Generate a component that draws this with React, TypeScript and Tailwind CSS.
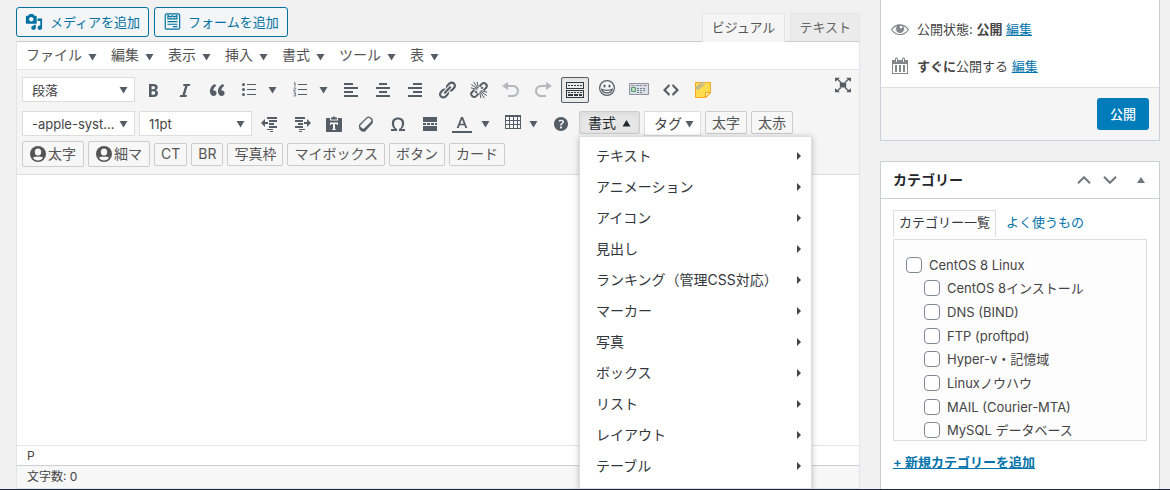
import type { ReactNode } from "react";
import clsx from "clsx";

const MENUS = ["ファイル", "編集", "表示", "挿入", "書式", "ツール", "表"];

const FORMAT_ITEMS = [
  "テキスト",
  "アニメーション",
  "アイコン",
  "見出し",
  "ランキング（管理CSS対応）",
  "マーカー",
  "写真",
  "ボックス",
  "リスト",
  "レイアウト",
  "テーブル",
];

const CATEGORIES = [
  { name: "CentOS 8 Linux", child: false },
  { name: "CentOS 8インストール", child: true },
  { name: "DNS (BIND)", child: true },
  { name: "FTP (proftpd)", child: true },
  { name: "Hyper-v・記憶域", child: true },
  { name: "Linuxノウハウ", child: true },
  { name: "MAIL (Courier-MTA)", child: true },
  { name: "MySQL データベース", child: true },
];

const PATHS = {
  bold: "M6 4v13h4.54c1.37 0 2.46-.33 3.26-1 .8-.66 1.2-1.58 1.2-2.77 0-.84-.17-1.51-.51-2.01s-.9-.85-1.67-1.03v-.09c.57-.1 1.02-.4 1.36-.9s.51-1.13.51-1.91c0-1.14-.39-1.98-1.17-2.5C12.75 4.26 11.5 4 9.78 4H6zm2.57 5.15V6.26h1.36c.73 0 1.27.11 1.61.32.34.22.51.58.51 1.07 0 .54-.16.92-.47 1.15s-.82.35-1.51.35h-1.5zm0 2.19h1.6c1.44 0 2.16.53 2.16 1.61 0 .6-.17 1.05-.51 1.34s-.86.43-1.57.43H8.57v-3.38z",
  italic: "M14.78 6h-2.13l-2.8 9h2.12l-.62 2H4.6l.62-2h2.14l2.8-9H8.03l.62-2h6.75z",
  quote: "M9.49 13.22c0-.74-.2-1.38-.61-1.9-.62-.78-1.83-.88-2.53-.72-.29-1.65 1.11-3.75 2.92-4.65L7.88 4c-2.73 1.3-5.42 4.28-4.96 8.05C3.21 14.43 4.59 16 6.54 16c.85 0 1.56-.25 2.12-.75s.83-1.18.83-2.03zm8.05 0c0-.74-.2-1.38-.61-1.9-.63-.78-1.83-.88-2.53-.72-.29-1.65 1.11-3.75 2.92-4.65L15.93 4c-2.73 1.3-5.41 4.28-4.95 8.05.29 2.38 1.66 3.95 3.61 3.95.85 0 1.56-.25 2.12-.75s.83-1.18.83-2.03z",
  alignLeft: "M12 5V3H3v2h9zm5 4V7H3v2h14zm-5 4v-2H3v2h9zm5 4v-2H3v2h14z",
  alignCenter: "M14 5V3H6v2h8zm3 4V7H3v2h14zm-3 4v-2H6v2h8zm3 4v-2H3v2h14z",
  alignRight: "M17 5V3H8v2h9zm0 4V7H3v2h14zm0 4v-2H8v2h9zm0 4v-2H3v2h14z",
  link: "M17.74 2.76c1.68 1.69 1.68 4.41 0 6.1l-1.53 1.52c-1.12 1.12-2.7 1.47-4.14 1.09l2.62-2.61.76-.77.76-.76c.84-.84.84-2.2 0-3.04-.84-.85-2.2-.85-3.04 0l-.77.76-3.38 3.38c-.37-1.44-.02-3.02 1.1-4.14l1.52-1.53c1.69-1.68 4.42-1.68 6.1 0zM8.59 13.43l5.34-5.34c.42-.42.42-1.1 0-1.52-.44-.43-1.13-.39-1.53 0l-5.33 5.34c-.42.42-.42 1.1 0 1.52.44.43 1.13.39 1.52 0zm-.76 2.29l4.14-4.15c.38 1.44.03 3.02-1.09 4.14l-1.52 1.53c-1.69 1.68-4.41 1.68-6.1 0-1.68-1.68-1.68-4.42 0-6.1l1.53-1.52c1.12-1.12 2.7-1.47 4.14-1.1l-4.14 4.15c-.85.84-.85 2.2 0 3.05.84.84 2.2.84 3.04 0z",
  undo: "M12 5H7V2L1 6l6 4V7h5c2.2 0 4 1.8 4 4s-1.8 4-4 4H7v2h5c3.3 0 6-2.7 6-6s-2.7-6-6-6z",
  redo: "M8 5h5V2l6 4-6 4V7H8c-2.2 0-4 1.8-4 4s1.8 4 4 4h5v2H8c-3.3 0-6-2.7-6-6s2.7-6 6-6z",
  omega: "M10 5.4c1.27 0 2.24.36 2.91 1.08.66.71 1 1.76 1 3.13 0 1.28-.23 2.37-.69 3.27-.47.89-1.27 1.52-2.22 2.12v2h6v-2h-3.69c.92-.64 1.62-1.34 2.12-2.34.49-1.01.74-2.13.74-3.35 0-1.78-.55-3.19-1.65-4.22S11.92 3.54 10 3.54s-3.43.53-4.52 1.57c-1.1 1.04-1.65 2.44-1.65 4.2 0 1.21.24 2.31.73 3.33.48 1.01 1.19 1.71 2.1 2.36H3v2h6v-2c-.98-.64-1.8-1.28-2.24-2.17-.45-.89-.67-1.96-.67-3.22 0-1.37.33-2.41 1-3.13C7.75 5.76 8.72 5.4 10 5.4z",
  help: "M17 10c0-3.87-3.14-7-7-7-3.87 0-7 3.13-7 7s3.13 7 7 7c3.86 0 7-3.13 7-7zm-6.3 1.48H9.14v-.43c0-.38.08-.7.24-.98s.46-.57.88-.89c.41-.29.68-.53.81-.71.14-.18.2-.39.2-.62 0-.25-.09-.44-.28-.58-.19-.13-.45-.19-.79-.19-.58 0-1.25.19-2 .57l-.64-1.28c.87-.49 1.8-.74 2.77-.74.81 0 1.45.2 1.92.58.48.39.71.91.71 1.55 0 .43-.09.8-.29 1.11-.19.32-.57.67-1.11 1.06-.38.28-.61.49-.71.63-.1.15-.15.34-.15.57v.35zm-1.47 2.74c-.18-.17-.27-.42-.27-.73 0-.33.08-.58.26-.75s.43-.25.77-.25c.32 0 .57.09.75.26s.27.42.27.74c0 .3-.09.55-.27.72-.18.18-.43.27-.75.27-.33 0-.58-.09-.76-.26z",
  code: "M9 6l-4 4 4 4-1 2-6-6 6-6zm2 8l4-4-4-4 1-2 6 6-6 6z",
  media: "M13 11V4c0-.55-.45-1-1-1h-1.67L9 1H5L3.67 3H2c-.55 0-1 .45-1 1v7c0 .55.45 1 1 1h10c.55 0 1-.45 1-1zM7 4.5c1.38 0 2.5 1.12 2.5 2.5S8.38 9.5 7 9.5 4.5 8.38 4.5 7 5.62 4.5 7 4.5zM14 6h5v10.5c0 1.38-1.12 2.5-2.5 2.5S14 17.88 14 16.5s1.12-2.5 2.5-2.5c.17 0 .34.02.5.05V9h-3V6zm-4 8.05V13h2v3.5c0 1.38-1.12 2.5-2.5 2.5S7 17.88 7 16.5 8.12 14 9.5 14c.17 0 .34.02.5.05z",
  eye: "M18.3 9.5C15 4.9 8.5 3.8 3.9 7.2c-1.2.9-2.2 2.1-3 3.4.2.4.5.8.8 1.2 3.3 4.6 9.6 5.6 14.2 2.4.9-.7 1.7-1.4 2.4-2.4.3-.4.5-.8.8-1.2-.3-.4-.5-.8-.8-1.1zm-8.2-2.3c.5-.5 1.3-.5 1.8 0s.5 1.3 0 1.8-1.3.5-1.8 0-.5-1.3 0-1.8zm-.1 7.7c-3.1 0-6-1.6-7.7-4.2C3.5 9 5.1 7.8 7 7.2c-.7.8-1 1.7-1 2.7 0 2.2 1.7 4.1 4 4.1 2.2 0 4.1-1.7 4.1-4v-.1c0-1-.4-2-1.1-2.7 1.9.6 3.5 1.8 4.7 3.5-1.7 2.6-4.6 4.2-7.7 4.2z",
  calendar: "M15 4h3v14H2V4h3V3c0-.83.67-1.5 1.5-1.5S8 2.17 8 3v1h4V3c0-.83.67-1.5 1.5-1.5S15 2.17 15 3v1zM6 3v2.5c0 .28.22.5.5.5s.5-.22.5-.5V3c0-.28-.22-.5-.5-.5S6 2.72 6 3zm7 0v2.5c0 .28.22.5.5.5s.5-.22.5-.5V3c0-.28-.22-.5-.5-.5s-.5.22-.5.5zm4 14V8H3v9h14zM7 16V9H5v7h2zm4 0V9H9v7h2zm4 0V9h-2v7h2z",
};

function Svg({ children, className = "h-5 w-5" }: { children: ReactNode; className?: string }) {
  return (
    <svg viewBox="0 0 20 20" fill="currentColor" className={clsx("shrink-0", className)} aria-hidden="true">
      {children}
    </svg>
  );
}

function Glyph({ name, className }: { name: keyof typeof PATHS; className?: string }) {
  return <Svg className={className}><path d={PATHS[name]} /></Svg>;
}

function Caret({ up = false }: { up?: boolean }) {
  return (
    <svg viewBox="0 0 9 8" className="h-2 w-[9px] shrink-0" fill="currentColor" aria-hidden="true">
      <path d={up ? "M4.500 1L8.500 7.500h-8z" : "M.5 1h8L4.500 7.500z"} />
    </svg>
  );
}

function ListIcon({ ordered = false }: { ordered?: boolean }) {
  return (
    <Svg>
      <path d="M8 4h9v1H8zM8 9h9v1H8zM8 14h9v1H8z" />
      {ordered ? (
        <path fill="none" stroke="currentColor" strokeWidth=".9" d="M4 3.2l1-.7v4M3.6 8.4c.2-.9 2-.9 2 .1 0 .8-1.900 1.400-2 2.400h2.200M3.600 12.900c.8-.7 2-.4 2 .4 0 .7-.6.9-1.100.9.6 0 1.300.2 1.300 1 0 1.100-1.500 1.200-2.200.6" />
      ) : (
        <g><circle cx="4.5" cy="4.5" r="1.5" /><circle cx="4.5" cy="9.5" r="1.5" /><circle cx="4.5" cy="14.5" r="1.5" /></g>
      )}
    </Svg>
  );
}

function UnlinkIcon() {
  return (
    <Svg>
      <g fill="none" stroke="currentColor" strokeWidth="2">
        <path d="M10.5 6.5l2.3-2.6a2.9 2.9 0 014.1 4.1l-2.4 2.3M9.5 13.5l-2.3 2.6A2.9 2.9 0 013.1 12l2.4-2.3M12.2 8.6l1.5-1.5M6.3 12.9l1.6-1.6" />
        <path strokeWidth="1" d="M8.6 8.8L2.2 4.4M8.8 8.2L4.6 1.9M9.4 7.6L8 1.8M8.2 9.4L1.9 7.8M11.4 11.2l6.4 4.4M11.2 11.8l4.2 6.3M10.6 12.4l1.4 5.8M11.8 10.6l6.3 1.6" />
      </g>
    </Svg>
  );
}

function IndentIcon({ outdent = false }: { outdent?: boolean }) {
  return (
    <Svg>
      {outdent ? (
        <path d="M7 3h10v2H7zM9 6h8v2H9zM9 9h5v2H9zM9 12h8v2H9zM7 15h6v1H7zM10 17h3v1h-3zM1 9l4-4v3h3v2H5v3z" />
      ) : (
        <path d="M3 3h10v2H3zM3 6h8v2H3zM6 9h5v2H6zM3 12h8v2H3zM7 15h6v1H7zM7 17h3v1H7zM19 9l-4-4v3h-3v2h3v3z" />
      )}
    </Svg>
  );
}

function PasteIcon() {
  return (
    <Svg>
      <path d="M3 4h3v2.5h8V4h3c.6 0 1 .4 1 1v12c0 .6-.4 1-1 1H3c-.6 0-1-.4-1-1V5c0-.6.4-1 1-1z" />
      <path d="M7 5.5V3.5h1.5a1.6 1.6 0 013 0H13v2z" />
      <path fill="#f5f5f5" d="M6 8.5h8V11h-1l-.5-1h-1.5v5l1 .5v.5H8v-.5l1-.5v-5H7.500L7 11H6z" />
    </Svg>
  );
}

function EraserIcon() {
  return (
    <Svg>
      <path d="M3.4 12l-.2 3 2.600 2.600 3 .2 8-8.800-.6-3.400z" />
      <path fill="#f5f5f5" stroke="currentColor" strokeWidth="1.300" strokeLinejoin="round" d="M4 10.800l6.600-6.700c.9-.9 2.600-1.100 3.700-.2l1 .9c.9.900 1 2.500.1 3.500L8.800 14.600c-.8.800-2 .9-2.900.1l-1.600-1.300c-.8-.7-1-1.900-.3-2.600z" />
    </Svg>
  );
}

function ReadMoreIcon() {
  return <Svg><path d="M3 3h14v5H3zM3 9h3v2H3zM7 9h3v2H7zM11 9h3v2h-3zM15 9h2v2h-2zM3 12h14v5H3z" /></Svg>;
}

function ColorIcon() {
  return (
    <Svg>
      <path d="M9 3h2l4.300 11h-2l-1-2.800H7.700L6.700 14h-2zM10 5.200L8.300 9.700h3.400z" />
      <path d="M0 17h20v2H0z" />
    </Svg>
  );
}

function TableIcon() {
  return <Svg><path fillRule="evenodd" d="M2 1h16v14H2zM3 3v3h3V3zm4 0v3h3V3zm4 0v3h3V3zm4 0v3h2V3zM3 7v3h3V7zm4 0v3h3V7zm4 0v3h3V7zm4 0v3h2V7zM3 11v3h3v-3zm4 0v3h3v-3zm4 0v3h3v-3zm4 0v3h2v-3z" /></Svg>;
}

function KitchenSinkIcon() {
  return (
    <Svg className="h-5 w-5 text-[#32373c]">
      <path fillRule="evenodd" d="M1 2h18v7H1zM2 3v5h16V3zM1 10h18v8H1zM2 11v6h16v-6z" />
      <path d="M3 5h2v1H3zM6 5h2v1H6zM9 5h2v1H9zM12 5h2v1h-2zM15 5h2v1h-2zM3 12h2v1H3zM6 12h2v1H6zM9 12h2v1H9zM12 12h2v1h-2zM15 12h2v1h-2zM3 14h5v2H3zM9 14h4v2H9zM14 14h3v2h-3z" />
    </Svg>
  );
}

function SmileIcon() {
  return (
    <Svg>
      <circle cx="10" cy="8" r="7.400" fill="none" stroke="currentColor" strokeWidth="1.200" />
      <ellipse cx="7.500" cy="6" rx="1.100" ry="1.600" />
      <ellipse cx="12.500" cy="6" rx="1.100" ry="1.600" />
      <path fill="none" stroke="currentColor" strokeWidth="1.200" d="M4.800 9.300c.8 4.700 9.600 4.700 10.400 0-2.700 1.300-7.700 1.300-10.400 0z" />
    </Svg>
  );
}

function ShortcodeIcon() {
  return (
    <Svg>
      <path fill="#d8e0ea" stroke="#92929e" d="M.5 3.500h19v11H.500z" />
      <path fill="none" stroke="#b98b98" d="M2 5.500h4M14 5.500h4" />
      <path fill="#b9e0b9" stroke="#5a9470" d="M2.500 7.500h4v4h-4z" />
      <path stroke="#777c89" strokeDasharray="2 1" d="M7.500 5.500h6M8 8.500h9M8 10.500h8M8 12.500h6" />
    </Svg>
  );
}

function NoteIcon() {
  return (
    <Svg>
      <path fill="#ffdc4d" stroke="#f9a825" d="M2.500 2.500h15v10.500l-4.500 4.500H2.500z" />
      <path fill="#fff0a0" stroke="#f9a825" d="M12.500 17.500v-5h5z" />
      <path fill="none" stroke="#b8b39a" strokeWidth="1.200" d="M2.500 8.500L9 2.800c1.800-1 2.800.6 1.800 1.800L5.500 9c-1.200.8-2-.3-1.200-1.200L8.500 4" />
    </Svg>
  );
}

function FullscreenIcon() {
  return (
    <Svg className="h-4 w-4">
      <path d="M0 1h6L4.300 2.700 8 6.200 6.800 7.400 3 3.800 0 6zM20 1h-6l1.700 1.700L12 6.200l1.200 1.200L17 3.800 20 6zM0 19h6l-1.700-1.700L8 13.800l-1.200-1.200L3 16.200 0 14zM20 19h-6l1.700-1.700-3.700-3.500 1.200-1.200 3.800 3.600 3-2.200zM6 7h8v6H6z" />
    </Svg>
  );
}

function UserIcon() {
  return (
    <Svg className="h-4 w-4">
      <circle cx="10" cy="10" r="10" />
      <ellipse cx="10" cy="7.500" rx="4" ry="4.500" fill="#f7f7f7" />
      <path fill="#f7f7f7" d="M3.500 14.500c1.500-.8 3-1.300 4.500-1.500.8.600 3.200.6 4 0 1.500.2 3 .7 4.500 1.500-1.500 2.500-3.800 3.700-6.500 3.700s-5-1.200-6.500-3.700z" />
    </Svg>
  );
}

function FormIcon() {
  return (
    <Svg className="h-[18px] w-[18px]">
      <g fill="none" stroke="currentColor" strokeWidth="1.300">
        <rect x="2.500" y="1" width="16" height="17" rx="1.500" />
        <path d="M5.500 2v4.500h10V2M6 3l2.500 1.500L10.500 3l2 1.500L15 3M5 9.500h11M5 12.500h11M11 15.200h5" />
      </g>
    </Svg>
  );
}

function Tool({ label, off, active, children }: { label: string; off?: boolean; active?: boolean; children: ReactNode }) {
  return (
    <button
      aria-label={label}
      disabled={off}
      className={clsx(
        "flex h-[26px] w-7 shrink-0 items-center justify-center rounded-xs",
        off && "opacity-40",
        active && "border border-[#555d66] bg-[#ebebeb] shadow-inner",
      )}
    >
      {children}
    </button>
  );
}

function SplitTool({ label, narrow, children }: { label: string; narrow?: boolean; children: ReactNode }) {
  return (
    <button aria-label={label} className={clsx("flex h-[26px] shrink-0 items-center pl-1", narrow ? "w-11 gap-[2px]" : "w-[47px] gap-[5px]")}>
      {children}
      <span className="flex w-4 justify-center"><Caret /></span>
    </button>
  );
}

function TextTool({ children, tall }: { children: ReactNode; tall?: boolean }) {
  return (
    <button
      className={clsx(
        "flex shrink-0 items-center rounded-xs border border-[#ccc] bg-[#f7f7f7] text-sm leading-5 text-[#555]",
        tall ? "h-[26px] gap-[2px] px-[7px]" : "h-[23px] px-[6px]",
      )}
    >
      {children}
    </button>
  );
}

function Picker({ label, value, className }: { label: string; value: string; className: string }) {
  return (
    <div className={clsx("grid h-[25px] shrink-0 items-center border border-[#ddd] bg-white", className)}>
      <select aria-label={label} className="col-start-1 row-start-1 h-full w-full appearance-none bg-transparent pl-[9px] text-[#444] outline-none">
        <option>{value}</option>
      </select>
      <span className="pointer-events-none col-start-1 row-start-1 mr-[6px] justify-self-end"><Caret /></span>
    </div>
  );
}

function FormatMenu() {
  return (
    <div className="relative shrink-0 self-start">
      <button
        aria-haspopup="menu"
        aria-expanded="true"
        className="flex h-[23px] items-center gap-[6px] rounded-xs border border-[#ccc] bg-[#e6e6e6] px-2 text-sm leading-5 text-[#23282d] shadow-inner"
      >
        書式 <Caret up />
      </button>
      <div role="menu" className="absolute top-[25px] left-0 z-10 w-[233px] border border-[#ddd] bg-white pt-[3px] pb-[7px] shadow-[0_1px_6px_rgba(0,0,0,0.25)]">
        {FORMAT_ITEMS.map((item) => (
          <button key={item} role="menuitem" className="flex h-[31px] w-full items-center justify-between pr-[10px] pl-4 text-sm leading-5 text-[#32373c]">
            {item}
            <svg viewBox="0 0 4 8" className="h-2 w-1" fill="#444" aria-hidden="true"><path d="M0 0l4 4-4 4z" /></svg>
          </button>
        ))}
      </div>
    </div>
  );
}

function Editor() {
  return (
    <main className="flex min-w-0 flex-1 flex-col font-['Inter','Noto_Sans_CJK_JP',sans-serif]">
      {/* Media buttons and mode tabs */}
      <div className="flex h-[41px] shrink-0 justify-between">
        <div className="flex gap-[5px] pt-[7px]">
          <button className="flex h-[30px] items-center gap-[7px] rounded-[3px] border border-[#0071a1] bg-[#f3f5f6] px-2 pb-px text-[#0071a1]">
            <Glyph name="media" className="h-[18px] w-[18px]" />
            メディアを追加
          </button>
          <button className="flex h-[30px] items-center gap-[7px] rounded-[3px] border border-[#0071a1] bg-[#f3f5f6] px-2 pb-px text-[#0071a1]">
            <FormIcon />
            フォームを追加
          </button>
        </div>
        <div className="flex items-end gap-[5px]">
          <button className="z-1 -mb-px h-[29px] border border-b-0 border-[#e5e5e5] bg-[#f5f5f5] px-[9px] pb-[2px] text-[#555]">ビジュアル</button>
          <button className="h-7 border border-b-0 border-[#e5e5e5] bg-[#ebebeb] px-2 pb-px text-[#666]">テキスト</button>
        </div>
      </div>

      <div className="flex min-h-0 flex-1 flex-col border border-[#e2e4e7] border-t-[#ccc] bg-white">
        <nav className="flex h-7 shrink-0 items-center border-b border-[#e2e4e7] px-[2px] pb-[2px]">
          {MENUS.map((m) => (
            <button key={m} className="flex items-center gap-[6px] px-[7px] text-sm leading-5 text-[#555]">
              {m} <span className="pt-1 text-[#555d66]"><Caret /></span>
            </button>
          ))}
        </nav>

        {/* Toolbars */}
        <div className="shrink-0 border-b border-[#ddd] bg-[#f5f5f5] px-[5px] py-[7px] text-[#555d66]">
          <div className="mb-2 flex h-[26px] gap-1">
            <Picker label="段落形式" value="段落" className="w-[113px]" />
            <Tool label="太字"><Glyph name="bold" /></Tool>
            <Tool label="イタリック"><Glyph name="italic" /></Tool>
            <Tool label="引用"><Glyph name="quote" /></Tool>
            <SplitTool label="番号なしリスト"><ListIcon /></SplitTool>
            <SplitTool label="番号付きリスト"><ListIcon ordered /></SplitTool>
            <Tool label="左寄せ"><Glyph name="alignLeft" /></Tool>
            <Tool label="中央揃え"><Glyph name="alignCenter" /></Tool>
            <Tool label="右寄せ"><Glyph name="alignRight" /></Tool>
            <Tool label="リンク"><Glyph name="link" /></Tool>
            <Tool label="リンク解除"><UnlinkIcon /></Tool>
            <Tool label="取り消し" off><Glyph name="undo" /></Tool>
            <Tool label="やり直し" off><Glyph name="redo" /></Tool>
            <Tool label="ツールバー切り替え" active><KitchenSinkIcon /></Tool>
            <Tool label="絵文字"><SmileIcon /></Tool>
            <Tool label="ショートコード"><ShortcodeIcon /></Tool>
            <Tool label="ソースコード"><Glyph name="code" /></Tool>
            <Tool label="メモ"><NoteIcon /></Tool>
            <button aria-label="集中執筆モード" className="ml-auto flex h-4 w-[22px] items-center justify-center"><FullscreenIcon /></button>
          </div>
          <div className="mb-1 flex h-[26px] gap-1">
            <Picker label="フォント" value="-apple-syst..." className="w-[113px]" />
            <Picker label="フォントサイズ" value="11pt" className="w-[113px]" />
            <Tool label="インデントを減らす"><IndentIcon outdent /></Tool>
            <Tool label="インデントを増やす"><IndentIcon /></Tool>
            <Tool label="テキストとしてペースト"><PasteIcon /></Tool>
            <Tool label="書式設定をクリア"><EraserIcon /></Tool>
            <Tool label="特殊文字"><Glyph name="omega" /></Tool>
            <Tool label="続きを読む"><ReadMoreIcon /></Tool>
            <SplitTool label="テキスト色"><ColorIcon /></SplitTool>
            <SplitTool label="テーブル" narrow><TableIcon /></SplitTool>
            <Tool label="ヘルプ"><Glyph name="help" /></Tool>
            <FormatMenu />
            <Picker label="タグ" value="タグ" className="w-[57px] text-sm" />
            <TextTool>太字</TextTool>
            <TextTool>太赤</TextTool>
          </div>
          <div className="flex h-[26px] items-center gap-1">
            <TextTool tall><UserIcon />太字</TextTool>
            <TextTool tall><UserIcon />細マ</TextTool>
            <TextTool>CT</TextTool>
            <TextTool>BR</TextTool>
            <TextTool>写真枠</TextTool>
            <TextTool>マイボックス</TextTool>
            <TextTool>ボタン</TextTool>
            <TextTool>カード</TextTool>
          </div>
        </div>

        <div role="textbox" aria-label="本文" className="min-h-0 flex-1" />
        <div className="h-5 shrink-0 border-t border-[#e2e4e7] px-[10px] text-xs leading-5 text-[#444]">P</div>
        <div className="h-[23px] shrink-0 border-t border-[#ccd0d4] bg-[#f7f7f7] px-[10px] text-xs leading-[22px] text-[#444]">文字数: 0</div>
      </div>
    </main>
  );
}

function Sidebar() {
  return (
    <aside className="flex w-[280px] shrink-0 flex-col gap-5 font-['Inter','Noto_Sans_CJK_JP',sans-serif] text-[#444]">
      {/* Publish box */}
      <section className="border border-t-0 border-[#ccd0d4] bg-white">
        <div className="px-[9px] pt-[10px] pb-[2px]">
          <p className="flex h-[37px] items-center gap-[7px]">
            <Glyph name="eye" className="h-5 w-5 text-[#82878c]" />
            <span>公開状態: <b>公開</b> <a href="#visibility" className="text-[#0073aa] underline">編集</a></span>
          </p>
          <p className="flex h-[38px] items-center gap-[7px]">
            <Glyph name="calendar" className="h-5 w-5 text-[#82878c]" />
            <span><b>すぐに</b>公開する <a href="#timestamp" className="text-[#0073aa] underline">編集</a></span>
          </p>
        </div>
        <div className="flex justify-end border-t border-[#ddd] bg-[#f5f5f5] p-[10px]">
          <button className="h-8 rounded-[3px] bg-[#007cba] px-[13px] font-medium text-white">公開</button>
        </div>
      </section>

      {/* Categories box */}
      <section className="flex min-h-0 flex-1 flex-col border border-b-0 border-[#ccd0d4] bg-white">
        <header className="flex h-[37px] shrink-0 items-center border-b border-[#ccd0d4] pr-[14px] pl-3">
          <h2 className="flex-1 text-sm font-bold text-[#23282d]">カテゴリー</h2>
          <div className="flex items-center gap-3 text-[#72777c]">
            <button aria-label="上に移動">
              <svg viewBox="0 0 14 8" className="h-2 w-[14px]" fill="none" stroke="currentColor" strokeWidth="2"><path d="M1 7.200l6-6 6 6" /></svg>
            </button>
            <button aria-label="下に移動">
              <svg viewBox="0 0 14 8" className="h-2 w-[14px]" fill="none" stroke="currentColor" strokeWidth="2"><path d="M1 .8l6 6 6-6" /></svg>
            </button>
            <button aria-label="パネルを閉じる" className="pl-2">
              <svg viewBox="0 0 8 6" className="h-[6px] w-2" fill="currentColor"><path d="M4 0l4 6H0z" /></svg>
            </button>
          </div>
        </header>
        <div className="px-3 pt-[11px]">
          <div className="flex h-[29px] items-start gap-[10px]">
            <a href="#category-all" className="flex h-[27px] items-center border border-b-0 border-[#ddd] bg-[#fdfdfd] px-[5px] pb-1 text-[#32373c]">カテゴリー一覧</a>
            <a href="#category-pop" className="flex h-[27px] items-center pb-[3px] text-[#0073aa]">よく使うもの</a>
          </div>
          <div className="h-[202px] overflow-hidden border border-[#ddd] bg-[#fdfdfd] px-3 pt-[13px]">
            <ul className="grid h-[189px] auto-rows-fr">
              {CATEGORIES.map((c) => (
                <li key={c.name} className={clsx("flex items-center", c.child && "pl-[18px]")}>
                  <label className="flex items-center gap-[7px]">
                    <input type="checkbox" className="h-4 w-4 shrink-0 appearance-none rounded border border-[#7e8993] bg-white" />
                    {c.name}
                  </label>
                </li>
              ))}
            </ul>
          </div>
          <a href="#category-add" className="mt-[11px] inline-block font-semibold text-[#0073aa] underline">+ 新規カテゴリーを追加</a>
        </div>
      </section>
    </aside>
  );
}

export default function App() {
  return (
    <div className="flex h-screen flex-col overflow-hidden border-b border-[#1d2740] bg-[#f1f1f1] text-[13px] leading-5">
      <div className="flex min-h-0 flex-1 gap-5 pr-[10px] pl-4">
        <Editor />
        <Sidebar />
      </div>
    </div>
  );
}
